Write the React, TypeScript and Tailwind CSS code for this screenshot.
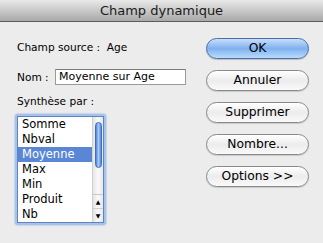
import React from "react";

const items = ["Somme", "Nbval", "Moyenne", "Max", "Min", "Produit", "Nb"];
const buttons = ["Annuler", "Supprimer", "Nombre...", "Options >>"];

const App = () => {
  return (
    <div className="w-[323px] h-[243px] bg-[#ececec] flex flex-col overflow-hidden font-['DejaVu_Sans',sans-serif] text-black">
      <div className="h-[22px] shrink-0 flex items-center justify-center bg-gradient-to-b from-[#e9e9e9] to-[#a9a9a9] border-b border-[#5c5c5c] text-[13px] text-[#1a1a1a]">
        Champ dynamique
      </div>
      <div className="flex flex-1">
        <div className="w-[190px] pl-[17px] pt-[18px] flex flex-col items-start">
          <div className="text-[10.6px] leading-[14px] whitespace-pre">Champ source :  Age</div>
          <div className="mt-[15px] flex items-center">
            <span className="text-[10.6px] leading-[14px] w-[38px] whitespace-pre">Nom :</span>
            <div className="w-[131px] h-[16px] bg-white border border-[#9a9a9a] border-t-[#7c7c7c] text-[11px] leading-[14px] pl-[3px]">
              Moyenne sur Age
            </div>
          </div>
          <div className="mt-[9px] text-[10.6px] leading-[14px]">Synthèse par :</div>
          <div className="mt-[6px] -ml-[2px] p-[2px] rounded-[3px] bg-[#a9c1e6] shadow-[0_0_1px_1px_#c7d7ef]">
            <div className="w-[87px] h-[107px] bg-white border border-[#5f84c2] flex">
              <div className="flex-1 flex flex-col">
                {items.map((item) => (
                  <div
                    key={item}
                    className={`h-[15px] text-[11.5px] leading-[15px] pl-[4px] ${
                      item === "Moyenne" ? "bg-[#5a86d6] text-white" : ""
                    }`}
                  >
                    {item}
                  </div>
                ))}
              </div>
              <div className="w-[11px] flex flex-col bg-gradient-to-r from-[#e4e4e4] via-[#fafafa] to-[#e8e8e8] border-l border-[#d0d0d0]">
                <div className="flex-1 pt-[5px] px-[1.5px]">
                  <div className="h-[46px] rounded-full bg-gradient-to-r from-[#4e83d8] via-[#a8cbf5] to-[#4f86dc] border border-[#3f6fbf]" />
                </div>
                <div className="h-[28px] flex flex-col border-t border-[#c8c8c8] text-[6px] leading-none items-center">
                  <div className="flex-1 flex items-center justify-center">▲</div>
                  <div className="flex-1 flex items-center justify-center border-t border-[#d0d0d0] w-full">▼</div>
                </div>
              </div>
            </div>
          </div>
        </div>
        <div className="pl-[16px] pt-[16px] flex flex-col gap-[11px]">
          <div className="w-[103px] h-[21px] rounded-full border border-[#4a6fa8] bg-gradient-to-b from-[#c9defa] via-[#7fb0ef] to-[#b8dcfd] flex items-center justify-center text-[12.3px] leading-none shadow-[0_1px_1px_rgba(0,0,0,0.2)]">
            OK
          </div>
          {buttons.map((b) => (
            <div
              key={b}
              className="w-[103px] h-[21px] rounded-full border border-[#8a8a8a] bg-gradient-to-b from-[#ffffff] via-[#ececec] to-[#fafafa] flex items-center justify-center text-[12.3px] leading-none shadow-[0_1px_1px_rgba(0,0,0,0.15)]"
            >
              {b}
            </div>
          ))}
        </div>
      </div>
    </div>
  );
};

export default App;
